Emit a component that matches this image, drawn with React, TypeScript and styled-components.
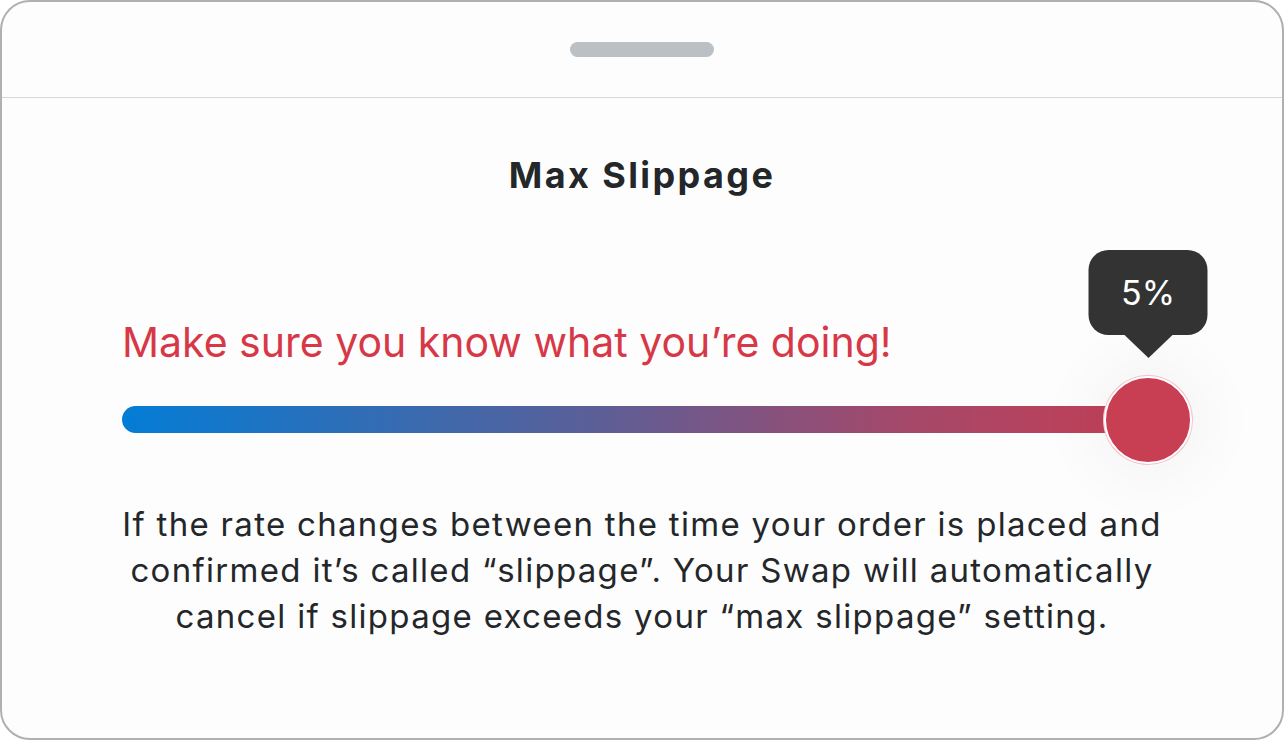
import styled, { createGlobalStyle } from 'styled-components';

const GlobalStyle = createGlobalStyle`
  html, body {
    margin: 0;
    padding: 0;
    background: #ffffff;
  }
  body {
    font-family: Inter, 'Noto Sans', sans-serif;
  }
`;

const Frame = styled.div`
  box-sizing: border-box;
  width: 1284px;
  height: 740px;
  border: 2px solid #b0b0b0;
  border-radius: 30px;
  background: #fdfdfd;
  overflow: hidden;
  display: flex;
  flex-direction: column;
`;

const Header = styled.header`
  height: 96px;
  border-bottom: 1px solid #d8d8d8;
  display: flex;
  justify-content: center;
  padding-top: 40px;
  box-sizing: border-box;
`;

const Grabber = styled.div`
  width: 144px;
  height: 15px;
  border-radius: 8px;
  background: #bbc0c5;
`;

const Content = styled.main`
  display: flex;
  flex-direction: column;
  padding: 0 120px;
`;

const Title = styled.h1`
  margin: 55px 0 0;
  font-size: 36px;
  line-height: 44px;
  font-weight: 700;
  letter-spacing: 2.4px;
  color: #24272a;
  text-align: center;
`;

const Warning = styled.p`
  margin: 119px 0 0;
  font-size: 41px;
  line-height: 52px;
  font-weight: 400;
  color: #d73847;
  white-space: nowrap;
`;

const SliderRow = styled.div`
  position: relative;
  margin-top: 38px;
  height: 27px;
`;

const Track = styled.div`
  height: 27px;
  border-radius: 14px;
  background: linear-gradient(90deg, #037dd6 0%, #5b5f98 45%, #a4486a 75%, #c63f55 100%);
`;

const Thumb = styled.div`
  position: absolute;
  right: -30px;
  top: 50%;
  width: 84px;
  height: 84px;
  margin-top: -44px;
  border-radius: 50%;
  background: #c83f53;
  border: 2px solid #ffffff;
  box-shadow: 0 0 0 1px #f3c3cb, 0 0 60px 20px rgba(0, 0, 0, 0.035);
`;

const Tooltip = styled.div`
  position: absolute;
  left: 50%;
  bottom: 100%;
  margin-bottom: 43px;
  transform: translateX(-50%);
  width: 119px;
  height: 85px;
  border-radius: 20px;
  background: #333333;
  color: #ffffff;
  font-size: 34px;
  display: flex;
  align-items: center;
  justify-content: center;

  &::after {
    content: '';
    position: absolute;
    top: 100%;
    left: 50%;
    margin-left: -24px;
    border-left: 24px solid transparent;
    border-right: 24px solid transparent;
    border-top: 23px solid #333333;
  }
`;

const Description = styled.p`
  margin: 68px -10px 0;
  font-size: 33px;
  line-height: 46px;
  letter-spacing: 1.3px;
  color: #24272a;
  text-align: center;
  white-space: nowrap;
`;

export default function App() {
  return (
    <>
      <GlobalStyle />
      <Frame>
        <Header>
          <Grabber />
        </Header>
        <Content>
          <Title>Max Slippage</Title>
          <Warning>Make sure you know what you’re doing!</Warning>
          <SliderRow>
            <Track />
            <Thumb>
              <Tooltip>5%</Tooltip>
            </Thumb>
          </SliderRow>
          <Description>
            If the rate changes between the time your order is placed and
            <br />
            confirmed it’s called “slippage”. Your Swap will automatically
            <br />
            cancel if slippage exceeds your “max slippage” setting.
          </Description>
        </Content>
      </Frame>
    </>
  );
}
